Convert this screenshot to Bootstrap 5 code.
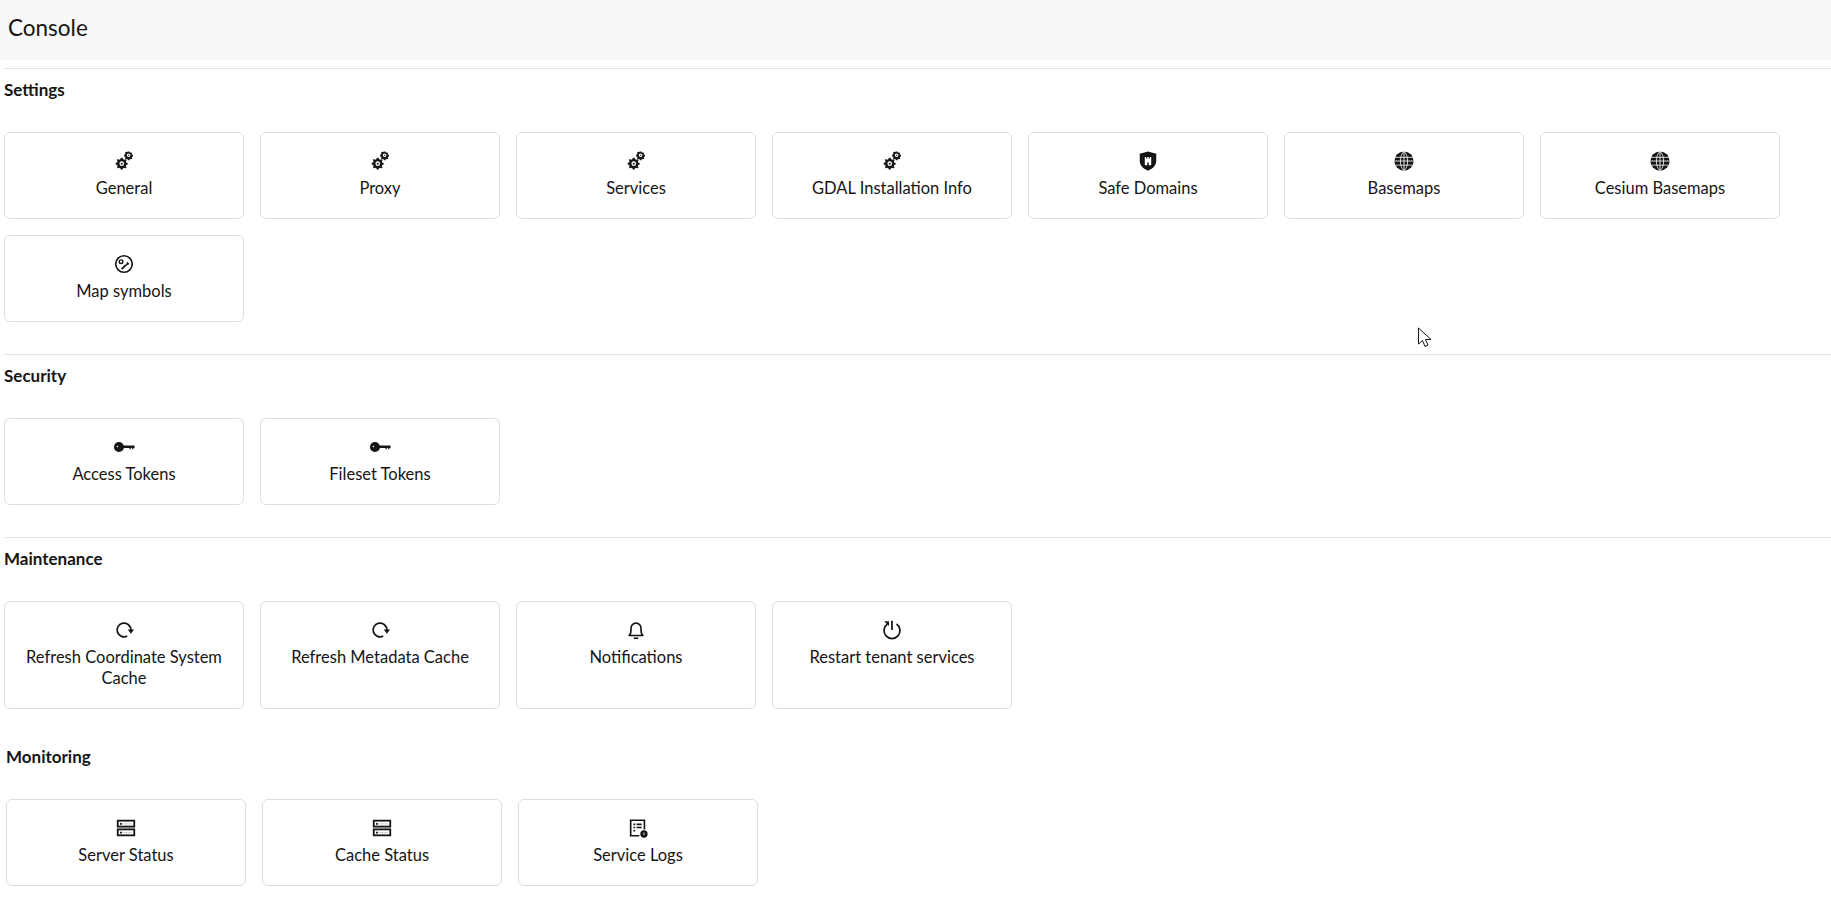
<!DOCTYPE html>
<html lang="en">
<head>
<meta charset="utf-8">
<title>Console</title>
<link href="https://cdn.jsdelivr.net/npm/bootstrap@5.3.0/dist/css/bootstrap.min.css" rel="stylesheet">
<style>
body{font-family:"Lato","Liberation Sans",sans-serif;color:#161513;background:#fff;overflow:hidden;height:924px;position:relative}
.top-bar{height:60px;background:#f8f8f8;padding:0 8px;display:flex;align-items:center}
.top-title{font-size:22.5px;line-height:1;margin:0;font-weight:400;position:relative;top:-2px}
.sec{padding-left:4px}
.sec-rule{border-top:1px solid #e4e3e2;margin:0;opacity:1}
.sec-title{font-size:17px;font-weight:700;line-height:20px;margin:0;padding:11px 0 32px}
.tile-grid{display:flex;flex-wrap:wrap;gap:16px}
.tile{width:240px;min-height:87px;border:1px solid #dfdedd;border-radius:6px;background:#fff;padding:17px 16px 19px;text-align:center;font-size:16.5px;line-height:21px}
.tile svg{display:block;margin:0 auto 6px;width:22px;height:22px}
.s1{margin-top:8px;padding-bottom:32px}
.s2{padding-bottom:32px}
.s3{padding-bottom:28px}
.s4{padding-left:6px}
.s4 .sec-title{padding-top:10px}
.cursor{position:absolute;left:1417px;top:327px;width:16px;height:22px}
</style>
</head>
<body>
<svg width="0" height="0" class="position-absolute">
<defs>
<symbol id="i-gears" viewBox="0 0 24 24">
<g fill="#161513">
<path d="M9 8.500l1.600.1.4 1.500 1.300.6 1.300-.8 1.200 1.200-.8 1.300.5 1.300 1.500.4v1.800l-1.500.4-.5 1.300.8 1.300-1.200 1.200-1.300-.8-1.300.6-.4 1.500H8.400l-.4-1.500-1.300-.6-1.300.8-1.200-1.200.8-1.300-.5-1.300L3 15.800V14l1.500-.4.5-1.300-.8-1.300 1.200-1.200 1.300.8 1.300-.6.4-1.500zM9.500 12.400a2.500 2.500 0 1 0 0 5 2.500 2.500 0 0 0 0-5z" fill-rule="evenodd"/>
<circle cx="9.500" cy="14.900" r="1.100"/>
<path d="M16.200 1.500h1.600l.3 1 .8.4.9-.5 1.100 1.100-.5.9.4.8 1 .3v1.600l-1 .3-.4.8.5.9-1.100 1.100-.9-.5-.8.4-.3 1h-1.600l-.3-1-.8-.4-.9.5-1.100-1.100.5-.9-.4-.8-1-.3V4.900l1-.3.4-.8-.5-.9 1.100-1.100.9.5.8-.4zM17 3.700a2 2 0 1 0 0 4 2 2 0 0 0 0-4z" fill-rule="evenodd"/>
<circle cx="17" cy="5.700" r=".7"/>
</g>
</symbol>
<symbol id="i-shield" viewBox="0 0 24 24">
<path fill-rule="evenodd" fill="#161513" d="M12 1.500l9 2.500v8c0 4.800-3.800 8.500-9 10.500C6.800 20.500 3 16.800 3 12V4zM8.500 7.500v9h2.700v-3h1.600v3h2.700v-9h-1.600v1.700h-1.100V7.500h-1.600v1.700H10V7.500z"/>
</symbol>
<symbol id="i-globe" viewBox="0 0 24 24">
<circle cx="12" cy="12" r="10.500" fill="#161513"/>
<path d="M1 8h22M1 12h22M1 16.500h22M12 1v22M12 1.500C7 6 6.500 18 12 22.500M12 1.500C17 6 17.500 18 12 22.500" fill="none" stroke="#fff" stroke-width=".9"/>
</symbol>
<symbol id="i-symbol" viewBox="0 0 24 24">
<circle cx="12" cy="12" r="9" fill="none" stroke="#161513" stroke-width="1.800"/>
<circle cx="8.800" cy="9.500" r="2" fill="none" stroke="#161513" stroke-width="1.500"/>
<path d="M9.500 17.500l4.500-4.500" stroke="#161513" stroke-width="2"/>
<path d="M13.500 14.500l2-5 2.500 2.500z" fill="#161513"/>
</symbol>
<symbol id="i-key" viewBox="0 0 24 24">
<circle cx="6.500" cy="12" r="5.500" fill="#161513"/>
<circle cx="4.800" cy="11.500" r=".9" fill="#fff"/>
<path d="M10 10.300h13.500V13h-1.200v1.400h-1.500V13h-1.300v1.400H18V13h-8z" fill="#161513"/>
</symbol>
<symbol id="i-refresh" viewBox="0 0 24 24">
<path d="M15.500 18.600A7.500 7.500 0 1 1 19.500 12" fill="none" stroke="#161513" stroke-width="1.900"/>
<path d="M16 11.500h7l-3.500 4.500z" fill="#161513"/>
</symbol>
<symbol id="i-bell" viewBox="0 0 24 24">
<path d="M4.500 18h15c-1.500-1.300-2-2.700-2-5v-3a5.500 5.500 0 0 0-11 0v3c0 2.300-.5 3.700-2 5z" fill="none" stroke="#161513" stroke-width="1.800" stroke-linejoin="round"/>
<path d="M9.500 21h5" stroke="#161513" stroke-width="1.800"/>
</symbol>
<symbol id="i-restart" viewBox="0 0 24 24">
<path d="M7 5.500a8.700 8.700 0 1 0 10 0" fill="none" stroke="#161513" stroke-width="1.900"/>
<path d="M12 2v10" stroke="#161513" stroke-width="1.900"/>
<path d="M3.500 2.500h5.200v5.200z" fill="#161513"/>
</symbol>
<symbol id="i-server" viewBox="0 0 24 24">
<g fill="none" stroke="#161513" stroke-width="2">
<rect x="3" y="4" width="18" height="6.500"/>
<rect x="3" y="13.500" width="18" height="6.500"/>
</g>
<path d="M5.500 6.500h2v2h-2zM5.500 16h2v2h-2z" fill="#161513"/>
<path d="M8.500 7.500h10M8.500 17h10" stroke="#c8c8c8" stroke-width="1"/>
</symbol>
<symbol id="i-logs" viewBox="0 0 24 24">
<path d="M13.500 20.500H4v-17h15v10" fill="none" stroke="#161513" stroke-width="1.800"/>
<path d="M7 8h2M10.500 8H16M7 11.500h2M10.500 11.500H16M7 15h2" stroke="#161513" stroke-width="1.800"/>
<circle cx="18.500" cy="18.500" r="4" fill="#161513"/>
<path d="M18.500 17v2.500" stroke="#fff" stroke-width="1"/>
</symbol>
</defs>
</svg>

<div class="top-bar"><h1 class="top-title">Console</h1></div>

<section class="sec s1">
<hr class="sec-rule">
<h2 class="sec-title">Settings</h2>
<div class="tile-grid">
<div class="tile"><svg><use href="#i-gears"/></svg>General</div>
<div class="tile"><svg><use href="#i-gears"/></svg>Proxy</div>
<div class="tile"><svg><use href="#i-gears"/></svg>Services</div>
<div class="tile"><svg><use href="#i-gears"/></svg>GDAL Installation Info</div>
<div class="tile"><svg><use href="#i-shield"/></svg>Safe Domains</div>
<div class="tile"><svg><use href="#i-globe"/></svg>Basemaps</div>
<div class="tile"><svg><use href="#i-globe"/></svg>Cesium Basemaps</div>
<div class="tile"><svg><use href="#i-symbol"/></svg>Map symbols</div>
</div>
</section>

<section class="sec s2">
<hr class="sec-rule">
<h2 class="sec-title">Security</h2>
<div class="tile-grid">
<div class="tile"><svg><use href="#i-key"/></svg>Access Tokens</div>
<div class="tile"><svg><use href="#i-key"/></svg>Fileset Tokens</div>
</div>
</section>

<section class="sec s3">
<hr class="sec-rule">
<h2 class="sec-title">Maintenance</h2>
<div class="tile-grid">
<div class="tile"><svg><use href="#i-refresh"/></svg>Refresh Coordinate System Cache</div>
<div class="tile"><svg><use href="#i-refresh"/></svg>Refresh Metadata Cache</div>
<div class="tile"><svg><use href="#i-bell"/></svg>Notifications</div>
<div class="tile"><svg><use href="#i-restart"/></svg>Restart tenant services</div>
</div>
</section>

<section class="sec s4">
<h2 class="sec-title">Monitoring</h2>
<div class="tile-grid">
<div class="tile"><svg><use href="#i-server"/></svg>Server Status</div>
<div class="tile"><svg><use href="#i-server"/></svg>Cache Status</div>
<div class="tile"><svg><use href="#i-logs"/></svg>Service Logs</div>
</div>
</section>

<svg class="cursor" viewBox="0 0 16 22"><path d="M1.500 1v16l4-3.500 2.500 6 3-1.300-2.500-5.700h5.500z" fill="#fff" stroke="#161513" stroke-width="1"/></svg>
<script src="https://cdn.jsdelivr.net/npm/bootstrap@5.3.0/dist/js/bootstrap.bundle.min.js"></script>
</body>
</html>
